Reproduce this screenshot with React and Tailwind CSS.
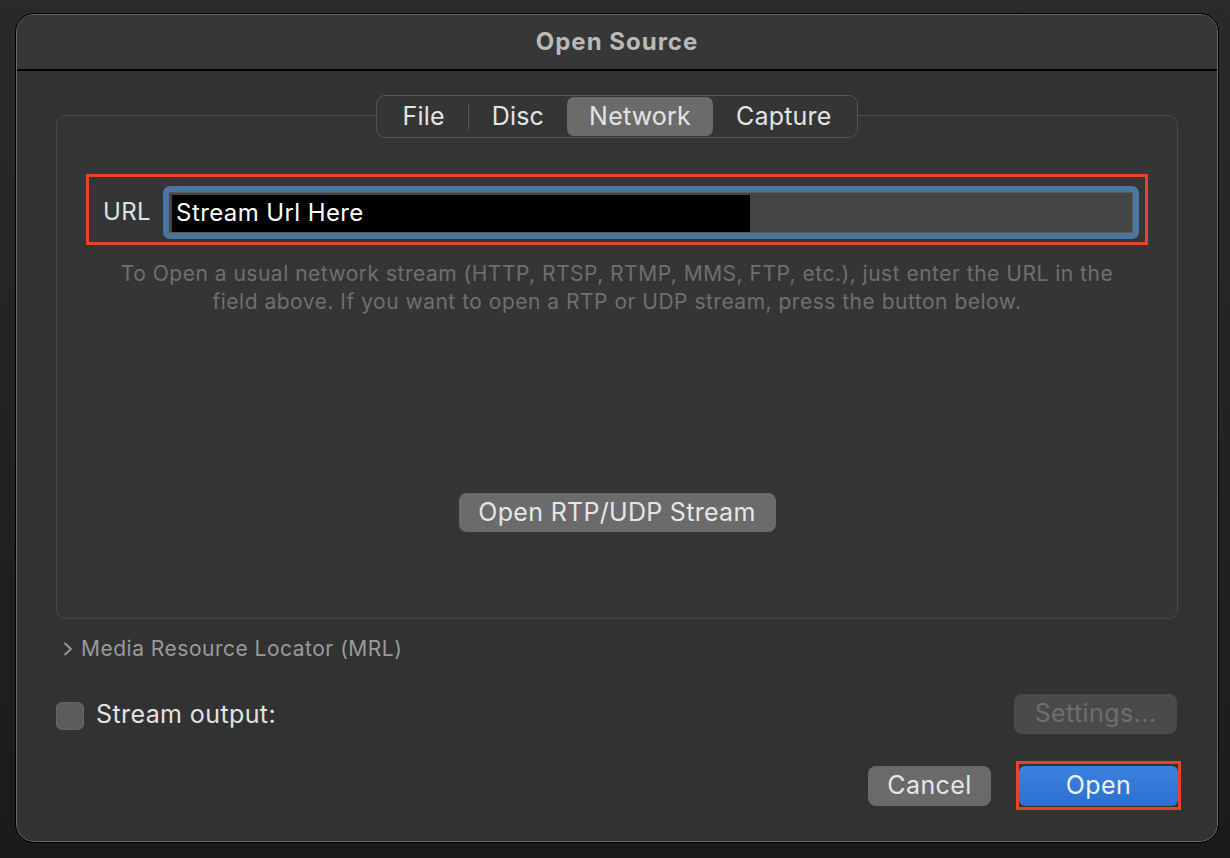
import React from "react";

const font = { fontFamily: "Inter, 'Noto Sans', sans-serif" };

const Tab = ({ label, active, divider }) => (
  <div className="flex items-center">
    {divider && <div className="w-px h-[26px] bg-[#555555]" />}
    <div
      className={
        "h-[39px] flex items-center justify-center rounded-[7px] text-[25px] tracking-[0.2px] text-[#e4e4e4] " +
        (active ? "bg-[#6b6b6b] px-[22px]" : "px-[23px]")
      }
    >
      {label}
    </div>
  </div>
);

export default function App() {
  return (
    <div
      className="w-[1230px] h-[858px] bg-gradient-to-b from-[#2a2a2a] to-[#1b1b1b] pl-[16px] pt-[14px]"
      style={font}
    >
      <div className="w-[1202px] h-[828px] rounded-[18px] border border-[#6a6a6a] outline outline-1 outline-black bg-[#323232] overflow-hidden flex flex-col">
        {/* title bar */}
        <div className="h-[56px] shrink-0 bg-[#373737] border-b-2 border-black flex items-center justify-center">
          <span className="text-[24px] font-bold text-[#b9b9b9] tracking-[1px]">Open Source</span>
        </div>

        <div className="flex-1 flex flex-col px-[39px] pt-[24px]">
          {/* segmented control */}
          <div className="flex justify-center relative z-10">
            <div className="flex items-center h-[43px] px-[2px] rounded-[9px] border border-[#555555] bg-[#353535]">
              <Tab label="File" />
              <Tab label="Disc" divider />
              <Tab label="Network" active />
              <Tab label="Capture" />
            </div>
          </div>

          {/* tab box */}
          <div className="-mt-[23px] h-[504px] rounded-[9px] border border-[#4a4a4a] bg-[#353535] flex flex-col items-center pt-[58px]">
            <div className="w-[1062px] h-[71px] border-[3px] border-[#e5432a] flex items-center pt-[5px] pl-[14px] pr-[6px]">
              <span className="text-[24px] tracking-[0.4px] text-[#e0e0e0] mr-[12px]">URL</span>
              <div className="flex-1 h-[53px] rounded-[7px] bg-[#4a76a0] p-[6px]">
                <div className="h-full bg-[#454545] border-t border-b border-r border-[#5a5a5a] pl-[3px] pt-[2px]">
                  <div className="w-[578px] h-full bg-black flex items-center pl-[4px]">
                    <span className="text-[24px] tracking-[0.4px] text-white">Stream Url Here</span>
                  </div>
                </div>
              </div>
            </div>

            <p className="mt-[15px] text-center text-[21px] tracking-[0.5px] leading-[28px] text-[#6f6f6f]">
              To Open a usual network stream (HTTP, RTSP, RTMP, MMS, FTP, etc.), just enter the URL in the
              <br />
              field above. If you want to open a RTP or UDP stream, press the button below.
            </p>

            <button className="mt-[177px] w-[317px] h-[39px] rounded-[8px] bg-[#6b6b6b] text-[25px] tracking-[0.3px] text-[#e6e6e6] flex items-center justify-center">
              Open RTP/UDP Stream
            </button>
          </div>

          {/* MRL */}
          <div className="mt-[17px] flex items-center pl-[6px] h-[26px]">
            <svg width="12" height="16" viewBox="0 0 12 16" className="mr-[7px]">
              <path d="M3 2.5 L9 8 L3 13.5" fill="none" stroke="#9a9a9a" strokeWidth="1.8" strokeLinecap="round" strokeLinejoin="round" />
            </svg>
            <span className="text-[21px] tracking-[0.5px] text-[#9a9a9a]">Media Resource Locator (MRL)</span>
          </div>

          {/* stream output */}
          <div className="mt-[32px] flex items-center justify-between pr-[1px]">
            <div className="flex items-center">
              <div className="w-[28px] h-[28px] rounded-[6px] bg-[#5c5c5c] border border-[#666666] mt-[4px]" />
              <span className="ml-[12px] text-[25px] tracking-[0.4px] text-[#e2e2e2] mt-[2px]">Stream output:</span>
            </div>
            <button className="w-[163px] h-[40px] rounded-[8px] bg-[#4a4a4a] text-[25px] tracking-[0.4px] text-[#6e6e6e] flex items-center justify-center">
              Settings...
            </button>
          </div>

          {/* bottom buttons */}
          <div className="mt-[27px] flex justify-end items-center">
            <button className="w-[123px] h-[40px] rounded-[8px] bg-[#6a6a6a] text-[25px] tracking-[0.4px] text-[#e6e6e6] flex items-center justify-center mr-[25px]">
              Cancel
            </button>
            <div className="w-[165px] h-[49px] border-[3px] border-[#e5432a] flex items-center justify-center -mr-[3px]">
              <button className="w-[159px] h-[40px] rounded-[6px] bg-gradient-to-b from-[#3a82e0] to-[#2f6fd0] text-[25px] tracking-[0.4px] text-[#f2f2f2] flex items-center justify-center">
                Open
              </button>
            </div>
          </div>
        </div>
      </div>
    </div>
  );
}
